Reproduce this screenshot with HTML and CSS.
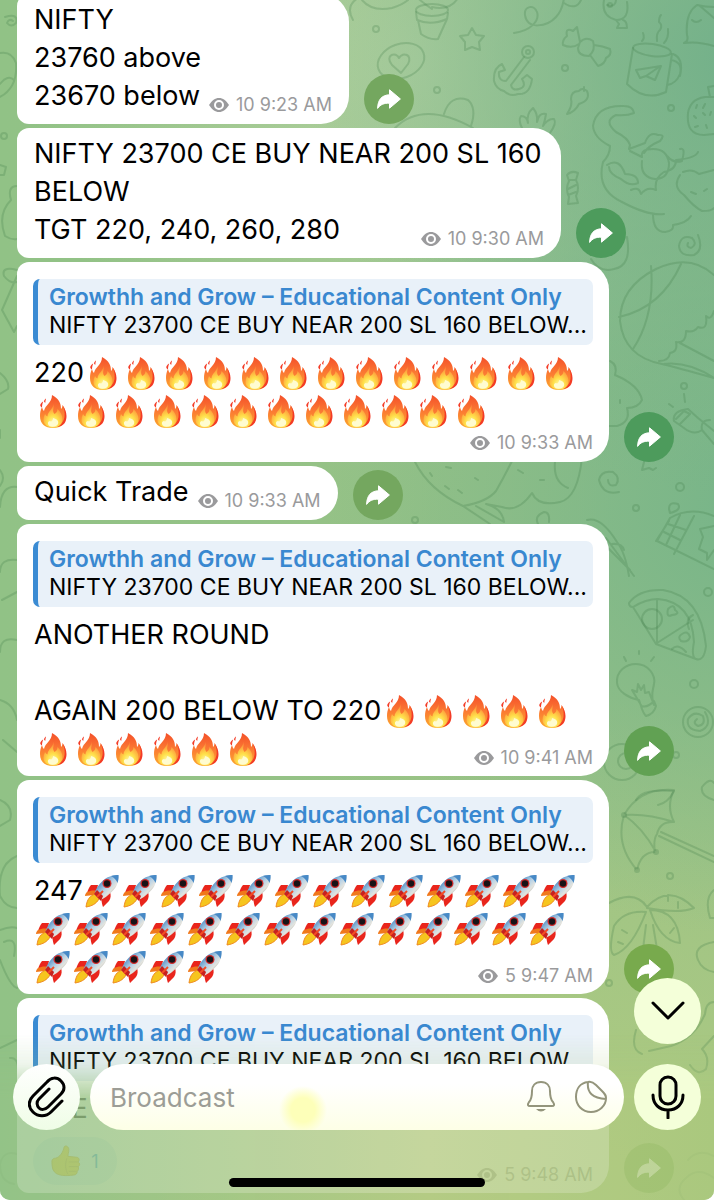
FILE: index.html
```
<!DOCTYPE html>
<html lang="en">

<head>
    <meta charset="UTF-8">
    <meta name="viewport" content="width=device-width, initial-scale=1.0">
    <title>Broadcast channel</title>
    <link rel="stylesheet" href="styles.css">
</head>

<body>
    <!-- shared icons -->
    <svg class="sprite" aria-hidden="true">
        <defs>
            <linearGradient id="flameOuter" x1="0" y1="0" x2="0" y2="1">
                <stop offset="0" stop-color="#f4502a" />
                <stop offset="0.5" stop-color="#fb7b33" />
                <stop offset="1" stop-color="#fba92c" />
            </linearGradient>
            <radialGradient id="flameInner" cx="0.5" cy="0.8" r="0.75">
                <stop offset="0" stop-color="#fffbb0" />
                <stop offset="0.4" stop-color="#ffe04a" />
                <stop offset="1" stop-color="#fd8338" />
            </radialGradient>
            <linearGradient id="hull" x1="0" y1="0" x2="1" y2="1">
                <stop offset="0.2" stop-color="#3f83bf" />
                <stop offset="0.5" stop-color="#b9d3e6" />
                <stop offset="0.65" stop-color="#e4e4de" />
                <stop offset="0.9" stop-color="#6d7574" />
            </linearGradient>
        </defs>
        <symbol id="eye" viewBox="0 0 20 14">
            <path fill="currentColor" d="M0 7C3 2.500 6 0 10 0s7 2.500 10 7c-3 4.500-6 7-10 7S3 11.500 0 7z" />
            <circle cx="10" cy="7" r="4" fill="none" stroke="#fff" stroke-width="2" />
        </symbol>
        <symbol id="forward" viewBox="0 0 24 20">
            <path fill="currentColor" stroke="currentColor" stroke-linejoin="round" d="M.6 19.400C.8 10.500 5 6 12.500 5.800V.8L23.400 10 12.500 19.200v-5C7 14 3.500 15.500.6 19.400z" />
        </symbol>
        <symbol id="fire" viewBox="0 0 38 38">
            <path fill="url(#flameOuter)" d="M18 3c7 4 9 8 9 14 1-1 1.500-2.500 1.500-4C31 16 32 20 32 24c0 8-5 12-13 12S6 32 6 24c0-3 .5-6 2-9 .5 2 1 3 2 4 1-6 8-8 8-16z" />
            <path fill="#f33b26" d="M6.200 13c.8-2 1.800-3 3-3.500-.8 1.800-1.200 4-1.200 6-1-.5-1.700-1.500-1.800-2.500zM10 9.500c.3-1.500 1-2.500 2-3-.5 1.500-.5 3-.8 4.500zM28.500 13c1.800 4 2.500 7 2 12-1 6-5 9-9 10 9 0 11-6 11-11 0-4-2-8-4-11z" />
            <path fill="url(#flameInner)" d="M19.500 12c1 5-2 6 1 10 2-1 3-3 3-5 3 3 5 6 5 10 0 5-4 8.500-9 8.500s-10-2.500-10-7.500c0-2 .5-4 1.500-6 1 1.500 1.500 2 2.500 2.500 0-5 5.500-7 6-12.500z" />
            <path fill="#fffcd0" d="M19 26c4 1 6 3 5 6-1 3-9 4-10 0-.5-2 1-3 2-3 1 1 3 0 3-3z" />
        </symbol>
        <symbol id="rocket" viewBox="0 0 38 38">
            <path fill="#e9251c" d="M15 13H8c-2 2-3 5-4 8 3-1 6-1 9 0zM27 20c1 3 1 6-1 9l-6 6c-1-2-1-5-2-8z" />
            <path fill="#f0781c" d="M4 20c-1 1-2 2-2 4l9-1 3-4c-4-1-7 0-10 1z" />
            <path fill="#f6c51e" stroke="#ef8a1c" d="M12 22c-5 2-8 5-9 13 6-1 10-3 13-8z" />
            <path fill="url(#hull)" d="M35.500 3c.5 7-2 13-8 18-3 3-6 5-10 7l-6-6c1-5 4-9 7-12 5-5 10-7 17-7z" />
            <path fill="#4789c6" d="M28 4c3-1 5-1 7.500-1 .2 2.500 0 5-1 8-1-3-3-5-6.500-7z" />
            <path fill="#c8211e" d="M11 22l3-4 6 6-2 5z" />
            <circle cx="24" cy="11.500" r="4.500" fill="#d32a2a" />
            <circle cx="24" cy="11.500" r="3.200" fill="#171317" />
            <path stroke="#f34b25" stroke-width="2" d="M14 25l6-6" />
        </symbol>
        <symbol id="thumb" viewBox="0 0 32 34">
            <path fill="#f8c719" stroke="#d1a018" d="M1 17c0-2 2-3 4-3 4-1 8-6 9-12 1-2 5-1 5 3 0 3-1 5-1 7l9 1c3 0 4 3 2 5 2 1 2 4 0 5 1 2 0 4-1 5 0 2-1 4-4 4-8 1-16 1-20-3C1 26 1 21 1 17z" />
            <path fill="none" stroke="#d1a018" d="M17 14c-2 5-2 12 1 17M19 18h10M19 23h10M19 28h8" />
        </symbol>
    </svg>

    <div class="app">
        <!-- wallpaper doodles -->
        <svg class="wallpaper" viewBox="0 0 714 1200" preserveAspectRatio="xMidYMid slice" aria-hidden="true">
            <!-- plant pot, star, butterfly trail -->
            <ellipse cx="432" cy="10" rx="16" ry="6" />
            <path d="M416 12l1 8q14 6 30-1l1-6M418 20l3 14q8 6 17 5l9-20M432 9q-12-8-17-14M432 7q18 4 26-9" />
            <path d="M472 28l4 7 8 1-5 6 1 8-8-3-7 3 0-8-5-6 8-1z" />
            <path d="M514 33c16-2 26-12 23-21-3-8-13-6-12 3 2 15 22 12 31 2 5-5 7-12 8-19M564 3q12 8 17-3M353 20q-8-14 5-22M362 0q10 12 30 8 10-3 16-8" />
            <!-- anchor -->
            <circle cx="528" cy="52" r="6" />
            <circle cx="528" cy="52" r="2" />
            <path d="M524 57l-18 24q-8 0-7-9l6-2-3-6q-9 4-8 17 2 8 10 10 6 6 14 3 12 1 14-15l-5-4-5 4q5 8-3 10-7 2-8-4l19-25" />
            <!-- bow tie -->
            <path d="M580 42l-3-15-4 4q-8-4-6 5-5 4-4 9 9 4 16-1M590 55l8 11q7-2 8-8 6-3 4-9-7-3-16-4M580 42q6-6 13-1 3 9-4 15-11 0-11-8z" />
            <!-- fish -->
            <path d="M604 0q-3 16 12 20 14 0 11-18M616 20l3 4-2 4h10q0-7-4-8M607 5q10 3 9-8" />
            <circle cx="610" cy="5" r="2" />
            <!-- mug -->
            <ellipse cx="652" cy="50" rx="19" ry="6" transform="rotate(8 652 50)" />
            <path d="M633 48l-6 36q18 18 39 8l6-38M671 60q12 2 9 14-4 10-13 11M673 54q11 4 7 22M636 70l25-4-6 14-9-4-6 2-4-8zM646 76l13-9M642 41q3-3 1-8M657 41q-1-8 3-11 3-5-1-8 0-5 2-7M664 43q5-5 4-14" />
            <!-- ghost and strawberry -->
            <path d="M684 43q5-2 3-8-2-22 10-30 8 2 17 2M684 43q14-2 30 3M692 20q4 4 9 0M700 6l14 12" />
            <path d="M714 97q-23-2-26 16-2 22 16 22l10-1M710 97l-2-10 6-1M697 105l-1 3M705 104l-2 4M694 116l2 2M703 113l2 2M711 112l-1 3M695 127l3-1M706 125l1 3" />
            <!-- leaf, lotus -->
            <path d="M567 114q8-2 12-10M579 104q12-4 8-13-5-4-8 0-8 0-8 8 2 6-4 15M584 87v4" />
            <path d="M522 128q-4-8-1-12 6 0 7 7-2-9 5-15 5 6 4 14 2-10 9-8-1 7-3 12 5-8 11-7 3 4-4 14M519 130q5 4 9 2" />
            <!-- teddy -->
            <path d="M395 128q28-28 78 0M444 114q6-20 24-14 9 8 3 26" />
            <!-- heart badge -->
            <ellipse cx="401" cy="61" rx="24" ry="17" transform="rotate(-20 401 61)" />
            <path d="M401 73l-9-8c-8-10 4-14 7-7 4-7 14-3 9 6z" />
            <!-- cat -->
            <path d="M634 113q-7 3-18 2-13 6 0 17 12 6 14 13l-1 4 16-6q4-12 13-8 8-1 2 6-12 5-16 12M634 113q-1-7-10-7-28-1-31 20 1 12 17 20 0 9-7 16-7 28 19 40 26 14 42 12M630 151l12 6q-2-8 11-8 14 0 16 14 0 16-14 16-15-2-13-18M667 156q7 8 15 5 4-14-2-12M607 165q12-8 18 9 13 0 13 9-8 4-17-4-12-5-12-12M631 190q8-4 10 4 6-8 15-4-2-12 8-18 12-2 12-12 20-2 22-8M680 175q-8 12 4 20 10 12 18 16 10 0 12-3M683 172q9-4 16 2l15-4M653 214q0 18 12 18 9-1 8-7 14-2 18-9M691 192l5 2M704 191l3-2" />
            <!-- wrapped candy -->
            <path d="M567 175q4-5 11-2l-2 7q4 8 0 16l2 7-10 1 1-7q-4-8 0-16zM569 180h7M568 189l8-4M568 195l8-3" />
            <path d="M591 259q8 14 23 10 18-3 13-32" />
            <!-- snail spiral -->
            <path d="M698 235q6 15-4 20-14 2-15-9 2-12 13-8 6 6-1 10-5-1-3-5" />
            <!-- beach ball -->
            <path d="M714 275q-24-22-58-6-36 18-36 52 4 36 42 43 16 4 52 14M651 266q4 50-18 83M681 264q-20 44-62 53M714 311q-3 10-8 5 2 15-8 11-4 6-12 4 0 13-10 11 2 10-6 11-1 8-11 8M680 343l34 18M664 364q24-3 50 14" />
            <!-- cupcake, telescope -->
            <path d="M610 361q8 4 5 14 24 10 27 25-4 8-15 8 4 14-10 18h-8M620 400v3" />
            <path d="M674 421q-2-10 14-12l10 9 16 13M674 421l10 7q10 8 18 2l12 14M676 419l8-8 6 3-10 10M702 430q-2-10 8-10M684 394l1 8M669 404l4 3" />
            <!-- bird and branch -->
            <path d="M415 462q14 28 48 44l27 18M463 506q24-4 33-15 8-14 16-30M476 506l28 16q-2-14-18-18l16 3q16 6 30-14 6 14 28 9 18-4 22-45M555 462q-2 20 13 26M430 473l2 3M445 486l4 3M458 490l4 3M475 478l3 2M518 470l5 3M540 480h4M538 524q-4-8 6-12 6 0 5 10M446 467l5 1" />
            <path d="M619 492q-16 4-20-12 2-10 14-8 8 6 3 13-8 2-8-5" />
            <path d="M644 462l-2 8 7-2 4 2 3-2M587 520q14-4 30 22 8 10 12 34M600 540l30 30M606 538l28 38M612 544q10-1 12 6" />
            <!-- milk carton -->
            <path d="M670 518l-13 23 57 28M670 518q20-12 44-2M656 541l13-20M680 515l-14 30M694 516l-20 38M668 524l18 6M664 532l16 8M714 526l-14 3 3 8-4 12 8 4 0 7 7-10M669 509q0-8 9-5 4 6-8 9z" />
            <!-- pizza slice -->
            <path d="M629 603q10-14 34-13 38 6 43 56-2 16-10 13-5-2-2-17-2-40-36-43-12 0-25 8-4 0-4-4zM633 607l23 37 40 15M657 599v44l36-23" />
            <circle cx="652" cy="619" r="10" />
            <path d="M668 609q6-6 7 1 6 4-3 5-6 3-4-6zM682 634q6-4 8 3-2 6-9 4-4-4 1-7zM693 615q-8 4-4 14M672 649q6-6 14 3" />
            <!-- light bulb -->
            <path d="M641 706l-2-6c-10-2-21-8-22-17-1-12 9-19 19-19 12 0 20 11 18 20-1 6-3 10-1 17M641 705l-9-15 5 2 1-8 3 6 3-5 1 8 4-1 5 13M641 706q7 2 13-5l2 5q-2 8-10 10-3-3-5-10zM639 651v3M624 657l2 4M654 657l-3 4" />
            <!-- lollipop, eye donut -->
            <circle cx="698" cy="722" r="15" />
            <path d="M705 712q8 14-5 19-14-1-12-12 6-9 15-3 3 9-5 10-6-3-1-7" />
            <circle cx="622" cy="762" r="18" />
            <circle cx="626" cy="761" r="8" />
            <path d="M636 800q6-12 38-9-6 12-16 14M714 800q-14-4-12-13 8-10 12-4" />
            <!-- umbrella -->
            <path d="M624 815q16-28 50-25-8 16 0 32-14-1-17 12-4 6-2 18-14 0-18 18-22-25-13-55zM624 815q22-2 50 7M624 815q18 12 32 37M661 832l53 24M659 836l55 26" />
            <circle cx="624" cy="815" r="2" />
            <circle cx="656" cy="852" r="2" />
            <circle cx="637" cy="870" r="2" />
            <!-- palm tree -->
            <path d="M647 907q-12-18-38-4M647 907q22-24 47 1-14 6-47 0zM650 910q28 0 30 33-20-2-30-33zM646 912q-22-2-32 14-6 26 0 29 18-6 32-43zM646 925l-3 24M653 925l4 24M668 895v6M678 902v6M622 930l5 3M618 942l5 2M670 933l4-5" />
            <path d="M714 942q-22 4-16 18 4 10 16 12M714 890q-10 8-4 28h4" />
            <!-- lower right -->
            <path d="M714 1002q-8 0-9 12-10 24-34 32l-22 5M690 1065q8 12 16 4 4-12-4-20l12-13M636 1030q-6 20 6 24M684 1200q-10-12 2-22 12-12 28 0M688 1160q10-12 26-4" />
            <!-- left edge -->
            <path d="M5 17q14-4 11 6-5 5-9 0 2-5 6-2M0 53q12-2 16 10 2 24-16 34M0 84q8-10 14-4M0 165l6 2-2 8H0M17 186q-10 0-6 14-14 14-6 36 6 4 12 3" />
            <path d="M17 270q-16-4-13 6 6 8 13 6M17 276L2 310l12 22 3-6M0 373q10 8 8 16l-8 5M0 430v8M17 487q-16-2-17 20M0 470q6 8 0 16" />
            <path d="M17 560q-17-2-17 12M2 600l15-8M17 640Q0 636 0 652M0 700q14 4 17 20M3 740l14 12M0 800q14 6 10 20L0 826" />
            <path d="M17 856q-20 8-17 40 6 12 17 12M0 930q10-4 17-2M4 942q14-6 10 14M0 960q10 26 17 28M17 1040l-17 8M10 1058q8-1 8 12M17 1154q-14-4-17 10 0 18 14 20" />
            <!-- dots -->
            <circle cx="376" cy="29" r="3" />
            <circle cx="437" cy="90" r="3" />
            <circle cx="565" cy="68" r="3" />
            <circle cx="671" cy="108" r="3" />
            <circle cx="4" cy="136" r="3" />
            <circle cx="684" cy="386" r="3" />
            <circle cx="680" cy="487" r="4" />
            <circle cx="636" cy="508" r="3" />
            <circle cx="415" cy="520" r="3" />
            <circle cx="708" cy="592" r="4" />
            <circle cx="694" cy="684" r="4" />
            <circle cx="676" cy="755" r="3" />
            <circle cx="670" cy="876" r="3" />
            <circle cx="609" cy="983" r="3" />
        </svg>

        <main class="feed">
            <article class="message">
                <div class="bubble">
                    <div class="text">NIFTY<br>23760 above<br>23670 below
                        <span class="meta"><svg class="eye"><use href="#eye" /></svg>10 9:23 AM</span>
                    </div>
                </div>
                <button class="share tone-olive" aria-label="Forward"><svg><use href="#forward" /></svg></button>
            </article>

            <article class="message">
                <div class="bubble bubble-long">
                    <div class="text">NIFTY 23700 CE BUY NEAR 200 SL 160<br>BELOW<br>TGT 220, 240, 260, 280
                        <span class="meta"><svg class="eye"><use href="#eye" /></svg>10 9:30 AM</span>
                    </div>
                </div>
                <button class="share tone-deep" aria-label="Forward"><svg><use href="#forward" /></svg></button>
            </article>

            <article class="message">
                <div class="bubble bubble-reply">
                    <blockquote class="quote">
                        <strong>Growthh and Grow – Educational Content Only</strong>
                        <p>NIFTY 23700 CE BUY NEAR 200 SL 160 BELOW...</p>
                    </blockquote>
                    <div class="text">220<span data-emoji="fire" data-count="25"></span>
                        <span class="meta meta-below"><svg class="eye"><use href="#eye" /></svg>10 9:33 AM</span>
                    </div>
                </div>
                <button class="share tone-deep" aria-label="Forward"><svg><use href="#forward" /></svg></button>
            </article>

            <article class="message">
                <div class="bubble">
                    <div class="text">Quick Trade
                        <span class="meta"><svg class="eye"><use href="#eye" /></svg>10 9:33 AM</span>
                    </div>
                </div>
                <button class="share tone-olive" aria-label="Forward"><svg><use href="#forward" /></svg></button>
            </article>

            <article class="message">
                <div class="bubble bubble-reply">
                    <blockquote class="quote">
                        <strong>Growthh and Grow – Educational Content Only</strong>
                        <p>NIFTY 23700 CE BUY NEAR 200 SL 160 BELOW...</p>
                    </blockquote>
                    <div class="text">ANOTHER ROUND<br><br>AGAIN 200 BELOW TO 220<span data-emoji="fire" data-count="11"></span>
                        <span class="meta"><svg class="eye"><use href="#eye" /></svg>10 9:41 AM</span>
                    </div>
                </div>
                <button class="share tone-leaf" aria-label="Forward"><svg><use href="#forward" /></svg></button>
            </article>

            <article class="message">
                <div class="bubble bubble-reply">
                    <blockquote class="quote">
                        <strong>Growthh and Grow – Educational Content Only</strong>
                        <p>NIFTY 23700 CE BUY NEAR 200 SL 160 BELOW...</p>
                    </blockquote>
                    <div class="text">247<span data-emoji="rocket" data-count="32"></span>
                        <span class="meta"><svg class="eye"><use href="#eye" /></svg>5 9:47 AM</span>
                    </div>
                </div>
                <button class="share tone-lime" aria-label="Forward"><svg><use href="#forward" /></svg></button>
            </article>

            <article class="message">
                <div class="bubble bubble-reply">
                    <blockquote class="quote">
                        <strong>Growthh and Grow – Educational Content Only</strong>
                        <p>NIFTY 23700 CE BUY NEAR 200 SL 160 BELOW...</p>
                    </blockquote>
                    <div class="text">THE</div>
                    <div class="footer">
                        <button class="reaction"><svg><use href="#thumb" /></svg>1</button>
                        <span class="meta"><svg class="eye"><use href="#eye" /></svg>5 9:48 AM</span>
                    </div>
                </div>
                <button class="share tone-lime" aria-label="Forward"><svg><use href="#forward" /></svg></button>
            </article>
        </main>

        <div class="dock">
            <button class="round scroll-down" aria-label="Scroll to bottom">
                <svg width="34" height="20" viewBox="0 0 34 20"><path d="M2 2l15 15L32 2" /></svg>
            </button>
            <form class="composer">
                <button type="button" class="round clip" aria-label="Attach">
                    <svg width="38" height="42" viewBox="-1 -1 38 42"><path d="M33 24L22 35C17 40 9 40 4 35s-5-11 0-16L18 5C22 0 28 0 32 4s4 9 0 13L19 30c-3 3-7 3-9 1s-3-6 0-9L20 12" /></svg>
                </button>
                <div class="field">
                    <input type="text" placeholder="Broadcast" aria-label="Broadcast">
                    <button type="button" class="tool" aria-label="Notifications">
                        <svg width="30" height="34" viewBox="0 0 30 34"><path d="M15 2C9 2 6 6 6 11c0 6-1 9-3 11-2 3-1 4 1 4h22c2 0 3-1 1-4-2-2-3-5-3-11 0-5-3-9-9-9z" /><path class="solid" d="M10 29h10q-5 5-10 0z" /></svg>
                    </button>
                    <button type="button" class="tool" aria-label="Stickers">
                        <svg width="34" height="34" viewBox="0 0 34 34"><path d="M14 2C6 3 2 9 2 17c0 8 6 15 15 15 8 0 15-6 15-14 0-3-1-4-4-7l-6-6c-3-3-5-4-8-3zM14 2q-2 16 18 17" /></svg>
                    </button>
                </div>
                <button type="button" class="round" aria-label="Record voice">
                    <svg width="34" height="44" viewBox="0 0 34 44"><path d="M17 2c-5 0-8 4-8 8v11c0 4 3 8 8 8s8-4 8-8V10c0-4-3-8-8-8zM2 20c0 9 6 15 15 15s15-6 15-15M17 35v8" /></svg>
                </button>
            </form>
            <div class="home-bar"></div>
        </div>
    </div>

    <script>
        // repeat the emoji named on each placeholder
        document.querySelectorAll('[data-emoji]').forEach(function (el) {
            const one = '<svg class="emoji"><use href="#' + el.dataset.emoji + '" /></svg>';
            el.innerHTML = one.repeat(Number(el.dataset.count));
        });
    </script>
</body>

</html>
```
FILE: styles.css
```
* {
    box-sizing: border-box;
}

body {
    margin: 0;
    background-color: #fff;
    color: #000;
    font-family: Inter, "Liberation Sans", sans-serif;
}

button {
    padding: 0;
    border: none;
    font: inherit;
    cursor: pointer;
}

.sprite {
    position: absolute;
    width: 0;
    height: 0;
}

.app {
    position: relative;
    height: 100vh;
    overflow: hidden;
    border-radius: 0 0 10px 10px;
    background:
        radial-gradient(circle at 104% 5%, #72b08a 0, rgba(114, 176, 138, 0) 32%),
        radial-gradient(circle at 106% 42%, #76b489 0, rgba(118, 180, 137, 0) 42%),
        radial-gradient(circle at 58% 5%, #b0d09e 0, rgba(176, 208, 158, 0) 32%),
        radial-gradient(circle at 80% 100%, #b0cb80 0, rgba(176, 203, 128, 0) 38%),
        linear-gradient(90deg, #91c286, #9ac287);
}

.wallpaper {
    position: absolute;
    inset: 0;
    width: 100%;
    height: 100%;
    fill: none;
    stroke: rgba(62, 124, 72, 0.25);
    stroke-width: 2;
    stroke-linecap: round;
    stroke-linejoin: round;
}

/* messages */
.feed {
    position: relative;
    display: flex;
    flex-direction: column;
    gap: 4px;
    margin-top: -6px;
    padding-left: 17px;
}

.message {
    display: flex;
    align-items: flex-end;
    gap: 15px;
}

.bubble {
    display: flow-root;
    max-width: calc(100vw - 122px);
    padding: 7px 17px 9px;
    border-radius: 12px 28px 28px 12px;
    background-color: #fff;
}

.bubble-long {
    min-width: 544px;
}

.bubble-reply {
    width: calc(100vw - 122px);
    padding: 17px 16px 8px;
}

.text {
    display: flow-root;
    font-size: 27px;
    line-height: 38px;
}

.bubble-reply .text {
    padding-left: 1px;
}

.emoji {
    display: inline-block;
    width: 38px;
    height: 38px;
    vertical-align: top;
}

.quote {
    margin: 0 0 9px;
    padding: 4px 0 6px 11px;
    border-left: 5px solid #3a8bd3;
    border-radius: 7px;
    background-color: #e9f1f9;
    font-size: 23px;
    line-height: 28px;
    white-space: nowrap;
}

.quote strong {
    display: block;
    color: #3988d0;
    font-weight: 600;
}

.quote p {
    margin: 0;
    overflow: hidden;
}

.meta {
    float: right;
    display: flex;
    align-items: center;
    gap: 7px;
    height: 20px;
    margin: 18px 0 0 9px;
    color: #9a9a9c;
    font-size: 18px;
    line-height: 20px;
}

.meta-below {
    height: 22px;
    margin-top: 2px;
}

.eye {
    width: 20px;
    height: 14px;
}

.share {
    display: flex;
    flex: none;
    align-items: center;
    justify-content: center;
    width: 50px;
    height: 50px;
    border-radius: 50%;
    color: #fff;
}

.share svg {
    width: 24px;
    height: 20px;
}

.tone-olive {
    background-color: #74a75f;
}

.tone-deep {
    background-color: #4d9b5c;
}

.tone-leaf {
    background-color: #61a153;
}

.tone-lime {
    background-color: #78aa4d;
}

.footer {
    display: flex;
    align-items: flex-end;
    justify-content: space-between;
    padding-top: 9px;
}

.reaction {
    display: flex;
    align-items: center;
    justify-content: center;
    gap: 10px;
    width: 84px;
    height: 48px;
    border-radius: 24px;
    background-color: #dfedf8;
    color: #2a8fe0;
    font-size: 18px;
}

.reaction svg {
    width: 30px;
    height: 32px;
}

/* bottom bar, laid over the feed */
.dock {
    position: absolute;
    right: 0;
    bottom: 0;
    left: 0;
    display: flex;
    flex-direction: column;
    padding: 0 13px 13px;
}

.dock::before {
    content: "";
    position: absolute;
    inset: 56px 0 0;
    background: linear-gradient(90deg, #94c387, #b7cc85 60%, #abc97e);
    opacity: 0.8;
    -webkit-mask-image: linear-gradient(transparent, rgba(0, 0, 0, 0.2) 30px, #000 64px);
    mask-image: linear-gradient(transparent, rgba(0, 0, 0, 0.2) 30px, #000 64px);
    pointer-events: none;
}

.composer {
    position: relative;
    display: flex;
    gap: 10px;
    margin: 20px 0 48px;
}

.round {
    display: flex;
    flex: none;
    align-items: center;
    justify-content: center;
    width: 67px;
    height: 66px;
    border-radius: 50%;
    background-color: #f4ffd9;
}

.round svg,
.tool svg {
    fill: none;
    stroke: #000;
    stroke-width: 3;
    stroke-linecap: round;
    stroke-linejoin: round;
}

.scroll-down {
    position: relative;
    align-self: flex-end;
}

.clip {
    background: linear-gradient(#fff, #effde6);
}

.field {
    display: flex;
    flex: 1;
    align-items: center;
    gap: 18px;
    min-width: 0;
    height: 66px;
    padding: 0 16px 0 20px;
    border-radius: 33px;
    background:
        radial-gradient(circle at 213px 46px, #fdffb9 12px, rgba(253, 255, 185, 0) 24px),
        linear-gradient(#fff 30%, #fdffe6);
}

.field input {
    flex: 1;
    min-width: 0;
    padding: 0;
    border: none;
    outline: none;
    background: none;
    font: inherit;
    font-size: 26px;
}

.field input::placeholder {
    color: #9c9d96;
    opacity: 1;
}

.tool {
    display: flex;
    background: none;
}

.tool svg {
    stroke: #94957c;
    stroke-width: 2;
}

.tool .solid {
    fill: #94957c;
    stroke: none;
}

.home-bar {
    position: relative;
    align-self: center;
    width: 256px;
    height: 9px;
    border-radius: 5px;
    background-color: #000;
}
```
